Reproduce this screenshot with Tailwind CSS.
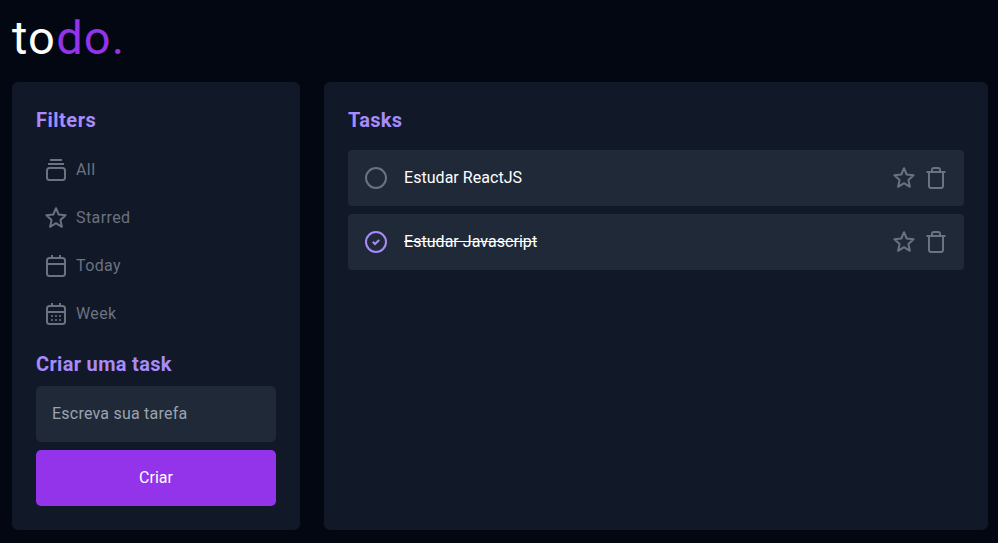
<!DOCTYPE html>
<html lang="pt-BR">
<head>
<meta charset="utf-8">
<title>todo.</title>
<script src="https://cdn.jsdelivr.net/npm/@tailwindcss/browser@4"></script>
</head>
<body class="h-[543px] overflow-hidden bg-[#030712] font-['Roboto',sans-serif] text-base text-white">
<svg class="hidden" fill="none">
  <symbol id="all" viewBox="0 0 24 24"><path d="M6 2H18M4 6H20"/><rect x="3" y="10" width="18" height="12" rx="2.5"/></symbol>
  <symbol id="star" viewBox="0 0 24 24"><path d="M12 2.2L14.7 8.5L21.6 9.2L16.4 13.9L17.9 20.8L12 17.2L6.1 20.8L7.6 13.9L2.4 9.2L9.3 8.5Z"/></symbol>
  <symbol id="today" viewBox="0 0 24 24"><rect x="3" y="4" width="18" height="18" rx="2.5"/><path d="M8 1V5M16 1V5M3 10H21"/></symbol>
  <symbol id="week" viewBox="0 0 24 24"><rect x="3" y="4" width="18" height="18" rx="2.5"/><path d="M8 1V5M16 1V5M3 10H21M7.2 14H8.8M11.2 14H12.8M15.2 14H16.8M7.2 18H8.8M11.2 18H12.8M15.2 18H16.8"/></symbol>
  <symbol id="trash" viewBox="0 0 24 24"><path d="M2.5 6H21.5M5 6V20Q5 22 7 22H17Q19 22 19 20V6M8 6V4Q8 2 10 2H14Q16 2 16 4V6"/></symbol>
  <symbol id="circle" viewBox="0 0 24 24"><circle cx="12" cy="12" r="10"/></symbol>
  <symbol id="done" viewBox="0 0 24 24"><circle cx="12" cy="12" r="10"/><path d="M8.8 11.8L11 14L15.2 10"/></symbol>
</svg>
<header class="flex h-[82px] pt-[6px] pl-3">
  <h1 class="text-[47px] leading-[64px] tracking-[1.2px]">to<span class="text-[#9333ea]">do.</span></h1>
</header>
<main class="flex h-[448px] gap-6 px-3 pr-[10px]">
  <aside class="flex w-72 shrink-0 flex-col rounded-md bg-[#111827] p-6">
    <h2 class="h-7 text-xl leading-7 font-bold tracking-[0.5px] text-[#a78bfa]">Filters</h2>
    <nav class="mt-3 flex flex-col tracking-[0.4px] text-[#6b7280]">
      <a class="flex h-12 items-center gap-2 pl-2"><svg class="size-6 fill-none stroke-current stroke-2 [stroke-linejoin:round]"><use href="#all"/></svg><span>All</span></a>
      <a class="flex h-12 items-center gap-2 pl-2"><svg class="size-6 fill-none stroke-current stroke-2 [stroke-linejoin:round]"><use href="#star"/></svg><span>Starred</span></a>
      <a class="flex h-12 items-center gap-2 pl-2"><svg class="size-6 fill-none stroke-current stroke-2 [stroke-linejoin:round]"><use href="#today"/></svg><span>Today</span></a>
      <a class="flex h-12 items-center gap-2 pl-2"><svg class="size-6 fill-none stroke-current stroke-2 [stroke-linejoin:round]"><use href="#week"/></svg><span>Week</span></a>
    </nav>
    <h2 class="mt-3 h-7 text-xl leading-7 font-bold tracking-[0.32px] text-[#a78bfa]">Criar uma task</h2>
    <input class="mt-2 h-14 w-full shrink-0 rounded-[5px] bg-[#1f2937] px-4 pb-0.5 tracking-[0.22px] placeholder:text-[#9ca3af]" placeholder="Escreva sua tarefa">
    <button class="mt-2 h-14 w-full shrink-0 rounded-[5px] bg-[#9333ea]">Criar</button>
  </aside>
  <section class="flex-1 rounded-md bg-[#111827] p-6">
    <h2 class="h-7 text-xl leading-7 font-bold tracking-[0.3px] text-[#a78bfa]">Tasks</h2>
    <ul class="mt-4 flex flex-col gap-2">
      <li class="flex h-14 items-center rounded bg-[#1f2937] px-4 text-[#6b7280]">
        <svg class="size-6 fill-none stroke-current stroke-2"><use href="#circle"/></svg>
        <span class="ml-4 flex-1 tracking-[0.04px] text-white"><span>Estudar ReactJS</span></span>
        <svg class="size-6 fill-none stroke-current stroke-2 [stroke-linejoin:round]"><use href="#star"/></svg>
        <svg class="ml-2 size-6 fill-none stroke-current stroke-2 [stroke-linejoin:round]"><use href="#trash"/></svg>
      </li>
      <li class="flex h-14 items-center rounded bg-[#1f2937] px-4 text-[#6b7280]">
        <svg class="size-6 fill-none stroke-[#a78bfa] stroke-2"><use href="#done"/></svg>
        <span class="ml-4 flex-1 tracking-[0.04px] text-white"><span class="line-through">Estudar Javascript</span></span>
        <svg class="size-6 fill-none stroke-current stroke-2 [stroke-linejoin:round]"><use href="#star"/></svg>
        <svg class="ml-2 size-6 fill-none stroke-current stroke-2 [stroke-linejoin:round]"><use href="#trash"/></svg>
      </li>
    </ul>
  </section>
</main>
</body>
</html>
